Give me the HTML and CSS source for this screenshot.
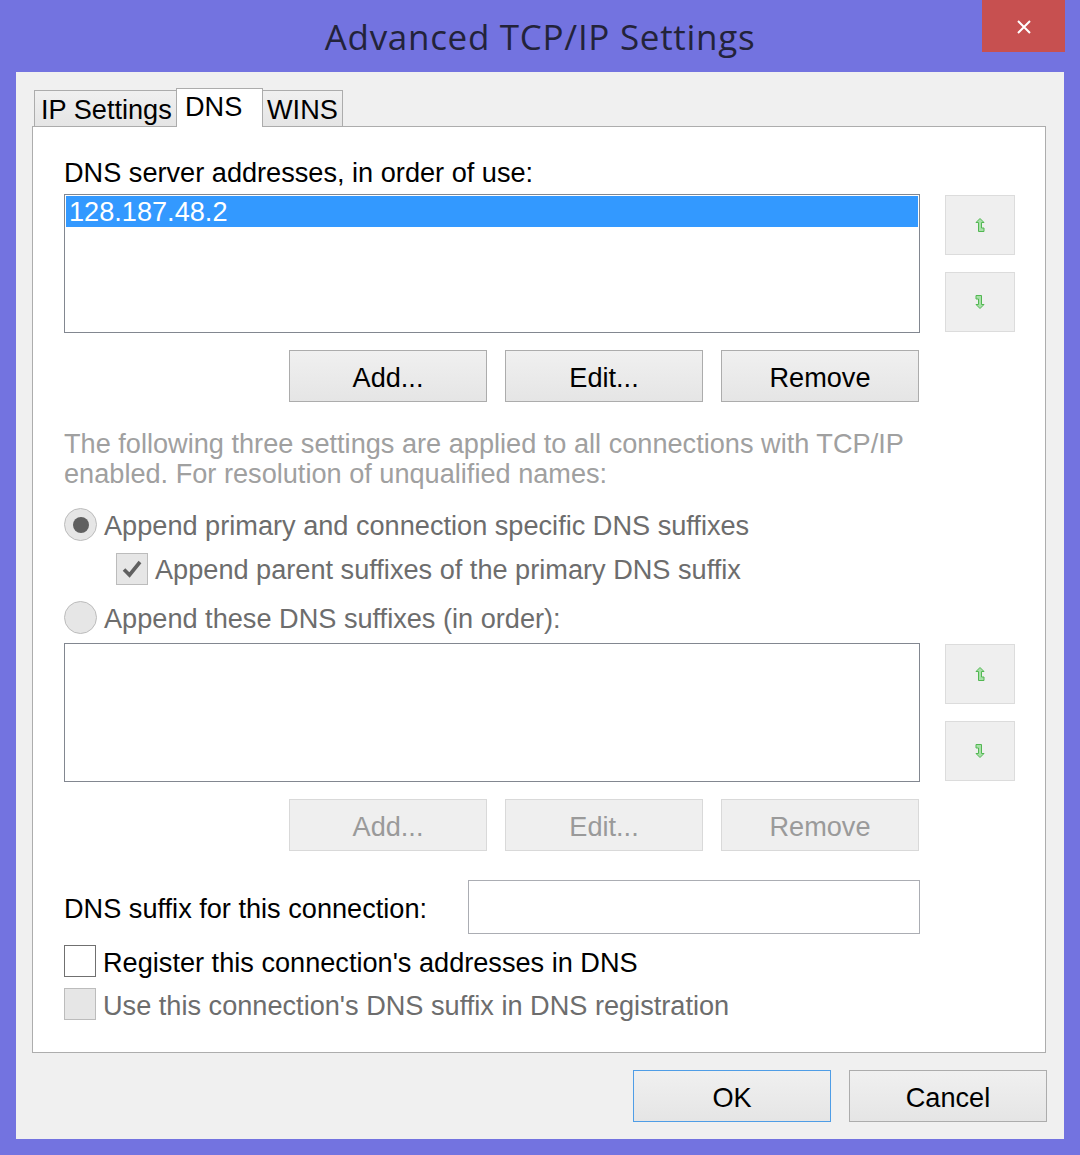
FILE: index.html
```html
<!DOCTYPE html>
<html>
<head>
<meta charset="utf-8">
<link rel="stylesheet" href="styles.css">
</head>
<body>
<div class="window">
  <div class="titlebar">
    <div class="title">Advanced TCP/IP Settings</div>
    <div class="close">
      <svg width="16" height="16" viewBox="0 0 16 16"><path d="M2 2 L14 14 M14 2 L2 14" stroke="#ffffff" stroke-width="2" fill="none"/></svg>
    </div>
  </div>
  <div class="client">
    <div class="tabs">
      <div class="tab tab-ip">IP Settings</div>
      <div class="tab tab-dns active">DNS</div>
      <div class="tab tab-wins">WINS</div>
    </div>
    <div class="panel">
      <div class="label">DNS server addresses, in order of use:</div>
      <div class="list-row">
        <div class="list-col">
          <div class="listbox">
            <div class="item selected">128.187.48.2</div>
          </div>
        </div>
        <div class="arrows">
          <div class="arrow-btn"><svg width="10" height="14" viewBox="0 0 10 14"><polygon points="5,0.5 9,4.5 6.5,4.5 6.5,10 9,10 9,13.5 3.5,13.5 3.5,4.5 1,4.5" fill="#a8e0a8" stroke="#52b752" stroke-width="1"/></svg></div>
          <div class="arrow-btn"><svg class="down" width="10" height="14" viewBox="0 0 10 14"><polygon points="5,0.5 9,4.5 6.5,4.5 6.5,10 9,10 9,13.5 3.5,13.5 3.5,4.5 1,4.5" fill="#a8e0a8" stroke="#52b752" stroke-width="1"/></svg></div>
        </div>
      </div>
      <div class="btn-row">
        <div class="btn">Add...</div>
        <div class="btn">Edit...</div>
        <div class="btn">Remove</div>
      </div>
      <div class="para">The following three settings are applied to all connections with TCP/IP<br>enabled. For resolution of unqualified names:</div>
      <div class="opt opt-radio1">
        <span class="radio checked"><span class="dot"></span></span>
        <span class="opt-text">Append primary and connection specific DNS suffixes</span>
      </div>
      <div class="opt opt-check1">
        <span class="check disabled-box">
          <svg width="22" height="20" viewBox="0 0 22 20"><path d="M3 10.5 L8.5 16 L19 3" stroke="#606060" stroke-width="3.6" fill="none" stroke-linejoin="miter"/></svg>
        </span>
        <span class="opt-text">Append parent suffixes of the primary DNS suffix</span>
      </div>
      <div class="opt opt-radio2">
        <span class="radio"></span>
        <span class="opt-text">Append these DNS suffixes (in order):</span>
      </div>
      <div class="list-row list-row2">
        <div class="list-col">
          <div class="listbox"></div>
        </div>
        <div class="arrows">
          <div class="arrow-btn"><svg width="10" height="14" viewBox="0 0 10 14"><polygon points="5,0.5 9,4.5 6.5,4.5 6.5,10 9,10 9,13.5 3.5,13.5 3.5,4.5 1,4.5" fill="#a8e0a8" stroke="#52b752" stroke-width="1"/></svg></div>
          <div class="arrow-btn"><svg class="down" width="10" height="14" viewBox="0 0 10 14"><polygon points="5,0.5 9,4.5 6.5,4.5 6.5,10 9,10 9,13.5 3.5,13.5 3.5,4.5 1,4.5" fill="#a8e0a8" stroke="#52b752" stroke-width="1"/></svg></div>
        </div>
      </div>
      <div class="btn-row">
        <div class="btn disabled">Add...</div>
        <div class="btn disabled">Edit...</div>
        <div class="btn disabled">Remove</div>
      </div>
      <div class="suffix-row">
        <span class="suffix-label">DNS suffix for this connection:</span>
        <div class="textbox"></div>
      </div>
      <div class="opt opt-reg">
        <span class="check enabled-box"></span>
        <span class="opt-text black">Register this connection's addresses in DNS</span>
      </div>
      <div class="opt opt-use">
        <span class="check disabled-box"></span>
        <span class="opt-text">Use this connection's DNS suffix in DNS registration</span>
      </div>
    </div>
    <div class="footer">
      <div class="btn default">OK</div>
      <div class="btn">Cancel</div>
    </div>
  </div>
</div>
</body>
</html>
```

FILE: styles.css
```css
* { box-sizing: border-box; }
html, body { margin: 0; padding: 0; }
body {
  width: 1080px;
  height: 1155px;
  background: #7373e0;
  font-family: "Liberation Sans", Arial, sans-serif;
  font-size: 27.15px;
  color: #000;
}
.window {
  width: 1080px;
  height: 1155px;
  background: #7373e0;
  padding: 0 16px 16px 16px;
  display: flex;
  flex-direction: column;
}
.titlebar {
  height: 72px;
  display: grid;
  grid-template-columns: 1fr auto 1fr;
  align-items: start;
}
.title {
  grid-column: 2;
  font-family: "Open Sans", "Noto Sans", sans-serif;
  font-size: 35px;
  letter-spacing: 0.7px;
  line-height: 48px;
  padding-top: 13px;
  color: #23233a;
  white-space: nowrap;
}
.close {
  grid-column: 3;
  justify-self: end;
  width: 83px;
  height: 52px;
  margin-right: -1px;
  background: #c75050;
  display: flex;
  align-items: center;
  justify-content: center;
  padding-top: 2px;
}
.client {
  flex: 1;
  background: #f0f0f0;
  padding: 16px 18px 17px 16px;
  display: flex;
  flex-direction: column;
}
.tabs {
  display: flex;
  align-items: flex-end;
  padding-left: 2px;
  position: relative;
  z-index: 1;
}
.tab {
  height: 37px;
  border: 1px solid #acacac;
  background: linear-gradient(#f0f0f0, #e5e5e5);
  line-height: 31px;
  padding-top: 3px;
  white-space: nowrap;
}
.tab-ip { width: 142px; padding-left: 6px; border-right: none; }
.tab-dns { width: 87px; padding-left: 8px; }
.tab-wins { width: 80px; padding-left: 4px; border-left: none; }
.tab.active {
  height: 39px;
  background: #ffffff;
  border-bottom: none;
  padding-top: 2px;
}
.panel {
  margin-top: -1px;
  background: #ffffff;
  border: 1px solid #adadad;
  padding: 29px 30px 32px 31px;
  display: flex;
  flex-direction: column;
}
.label {
  height: 31px;
  padding-top: 3px;
  line-height: 28px;
  white-space: nowrap;
}
.list-row {
  display: flex;
  margin-top: 7px;
}
.list-row2 { margin-top: 9px; }
.list-col { width: 856px; }
.listbox {
  height: 139px;
  border: 1px solid #828790;
  background: #ffffff;
  padding: 1px;
}
.item {
  height: 31px;
  line-height: 30px;
  padding-top: 1px;
  padding-left: 3px;
  white-space: nowrap;
}
.item.selected {
  background: #3399ff;
  color: #ffffff;
}
.arrows {
  margin-left: 25px;
  margin-top: 1px;
  display: flex;
  flex-direction: column;
  gap: 17px;
}
.arrow-btn {
  width: 70px;
  height: 60px;
  background: #efefef;
  border: 1px solid #dcdcdc;
  display: flex;
  align-items: center;
  justify-content: center;
}
.arrow-btn svg.down { transform: rotate(180deg); }
.btn-row {
  margin-top: 17px;
  width: 855px;
  display: flex;
  justify-content: flex-end;
  gap: 18px;
}
.btn {
  width: 198px;
  height: 52px;
  border: 1px solid #acacac;
  background: linear-gradient(#f0f0f0, #e5e5e5);
  display: flex;
  align-items: center;
  justify-content: center;
  line-height: 31px;
  padding-top: 3px;
  color: #000;
}
.btn.disabled {
  background: #efefef;
  border-color: #d9d9d9;
  color: #9a9a9a;
}
.btn.default {
  border-color: #4f9de6;
}
.para {
  margin-top: 27px;
  line-height: 30px;
  color: #a0a0a0;
  white-space: nowrap;
}
.opt {
  display: flex;
  align-items: center;
  gap: 7px;
  height: 32px;
  color: #6d6d6d;
  white-space: nowrap;
}
.opt-text { line-height: 31px; padding-top: 1px; }
.opt-text.black { color: #000; }
.opt-radio1 { margin-top: 19px; height: 33px; }
.opt-check1 { margin-top: 12px; padding-left: 52px; }
.opt-radio2 { margin-top: 16px; height: 33px; }
.opt-reg { margin-top: 11px; }
.opt-use { margin-top: 11px; }
.opt-reg .opt-text, .opt-use .opt-text { padding-top: 3px; }
.radio {
  width: 33px;
  height: 33px;
  border-radius: 50%;
  border: 1px solid #bcbcbc;
  background: #e6e6e6;
  display: flex;
  align-items: center;
  justify-content: center;
  flex: none;
}
.dot {
  width: 16px;
  height: 16px;
  border-radius: 50%;
  background: #606060;
}
.check {
  width: 32px;
  height: 32px;
  flex: none;
  display: flex;
  align-items: center;
  justify-content: center;
}
.disabled-box {
  background: #e6e6e6;
  border: 1px solid #bcbcbc;
}
.enabled-box {
  background: #ffffff;
  border: 1px solid #707070;
}
.suffix-row {
  margin-top: 29px;
  display: flex;
  align-items: center;
  height: 54px;
}
.suffix-label {
  width: 404px;
  line-height: 31px;
  padding-top: 3px;
  white-space: nowrap;
}
.textbox {
  width: 452px;
  height: 54px;
  border: 1px solid #abadb3;
  background: #ffffff;
}
.footer {
  margin-top: 17px;
  display: flex;
  justify-content: flex-end;
  gap: 18px;
  margin-right: -1px;
}
```
